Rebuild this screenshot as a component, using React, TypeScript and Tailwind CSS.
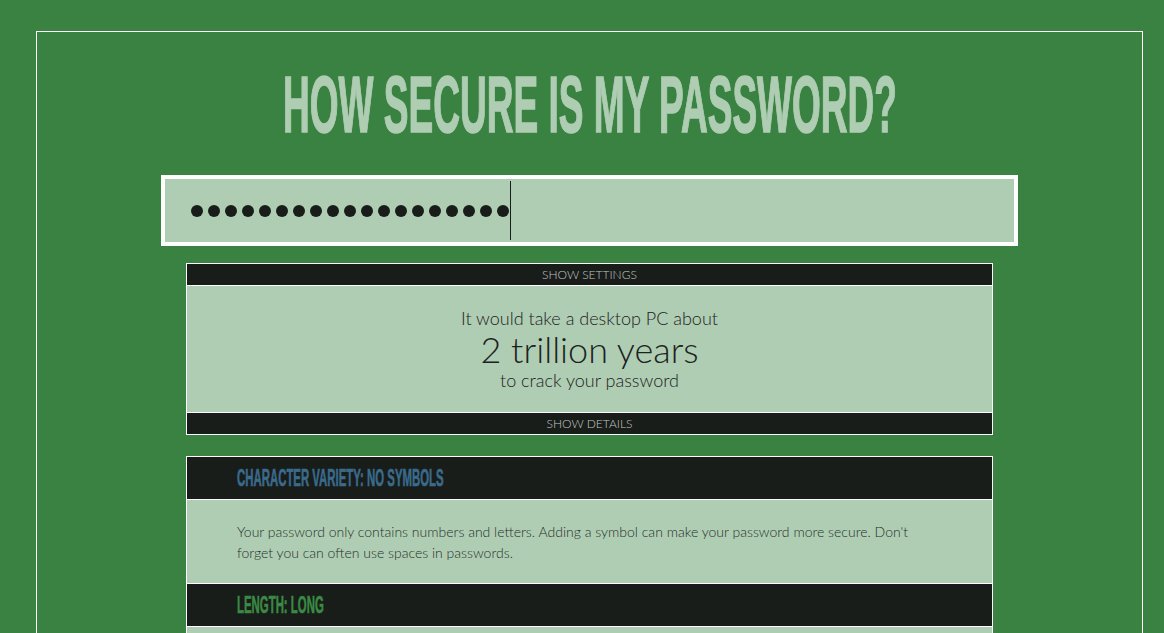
const dots = Array.from({ length: 19 });

const Detail = ({ title, color, text }: { title: string; color: string; text?: string }) => (
  <>
    <div className="flex h-[43px] items-center border-b border-white bg-[#191d1a] px-[50px]">
      <span
        className={`inline-block origin-left scale-x-[0.475] whitespace-nowrap font-['Liberation_Sans',sans-serif] text-[24px] font-bold [-webkit-text-stroke:0.6px_currentColor] ${color}`}
      >
        {title}
      </span>
    </div>
    <div className="min-h-[84px] border-b border-white bg-[#afcdb3] px-[50px] pt-[21px] pb-[20px] text-[14px] leading-[21px] font-light text-[#26302a]">
      {text}
    </div>
  </>
);

const App = () => {
  return (
    <div className="h-[633px] overflow-hidden bg-[#398242] pt-[31px] font-['Lato',sans-serif]">
      <div className="ml-[36px] h-[700px] w-[1107px] border border-white">
        <h1 className="mt-[33px] flex justify-center font-['Liberation_Sans',sans-serif] text-[80px] leading-none font-bold text-[#afcdb3]">
          <span className="inline-block shrink-0 scale-x-[0.463] whitespace-nowrap [-webkit-text-stroke:1.5px_#afcdb3]">
            HOW SECURE IS MY PASSWORD?
          </span>
        </h1>

        <div className="mx-auto mt-[30px] flex h-[71px] w-[857px] items-center border-4 border-white bg-[#afcdb3] pl-[26px]">
          <div className="flex items-center gap-[5px]">
            {dots.map((_, i) => (
              <span key={i} className="h-[12px] w-[12px] rounded-full bg-[#191d1a]" />
            ))}
          </div>
          <span className="ml-[1px] h-[59px] w-px bg-[#191d1a]" />
        </div>

        <div className="mx-auto mt-[17px] w-[807px] border border-white">
          <div className="flex h-[22px] items-center justify-center border-b border-white bg-[#191d1a] text-[12px] font-light text-[#c2c6c2]">
            SHOW SETTINGS
          </div>
          <div className="flex h-[126px] flex-col items-center justify-center bg-[#afcdb3] font-light text-[#1c221d]">
            <div className="text-[18px] leading-[22px]">It would take a desktop PC about</div>
            <div className="text-[36px] leading-[40px]">2 trillion years</div>
            <div className="text-[18px] leading-[22px]">to crack your password</div>
          </div>
          <div className="flex h-[22px] items-center justify-center border-t border-white bg-[#191d1a] text-[12px] font-light text-[#c2c6c2]">
            SHOW DETAILS
          </div>
        </div>

        <div className="mx-auto mt-[21px] w-[807px] border-x border-t border-white">
          <Detail
            title="CHARACTER VARIETY: NO SYMBOLS"
            color="text-[#3a6b8c]"
            text="Your password only contains numbers and letters. Adding a symbol can make your password more secure. Don't forget you can often use spaces in passwords."
          />
          <Detail title="LENGTH: LONG" color="text-[#3a8a45]" />
        </div>
      </div>
    </div>
  );
};

export default App;
